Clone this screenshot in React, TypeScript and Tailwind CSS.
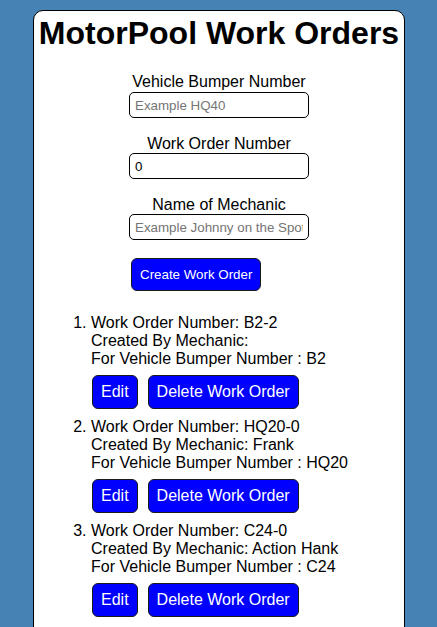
import React, { useState } from 'react';

type WorkOrder = {
  id: string;
  mechanic: string;
  bumper: string;
};

const orders: WorkOrder[] = [
  { id: 'B2-2', mechanic: '', bumper: 'B2' },
  { id: 'HQ20-0', mechanic: 'Frank', bumper: 'HQ20' },
  { id: 'C24-0', mechanic: 'Action Hank', bumper: 'C24' },
];

const btn =
  'flex items-center rounded-[6px] border border-[#1a1a1a] bg-[#0000ff] text-white leading-[normal] cursor-pointer whitespace-nowrap';

const App: React.FC = () => {
  const [bumper, setBumper] = useState('');
  const [orderNumber, setOrderNumber] = useState('0');
  const [mechanic, setMechanic] = useState('');

  return (
    <div className="min-h-[627px] w-full overflow-hidden bg-[#4682b4] pt-[10px] font-['Liberation_Sans',Arial,sans-serif] text-black">
      <div className="ml-[33px] w-[372px] rounded-[10px] border border-black bg-white pt-[4px] pb-[40px]">
        <h1 className="text-center text-[32px] font-bold leading-[normal]">MotorPool Work Orders</h1>

        {/* Form */}
        <div className="mx-auto mt-[21px] flex w-[180px] flex-col">
          <label className="-mx-[40px] text-center text-[16px] leading-[normal]">Vehicle Bumper Number</label>
          <input
            className="mt-[1px] h-[26px] w-[180px] rounded-[5px] border border-black px-[5px] text-[13.33px] outline-none placeholder:text-[#757575]"
            placeholder="Example HQ40"
            value={bumper}
            onChange={(e) => setBumper(e.target.value)}
          />

          <label className="-mx-[40px] mt-[17px] text-center text-[16px] leading-[normal]">Work Order Number</label>
          <input
            className="h-[26px] w-[180px] rounded-[5px] border border-black px-[5px] text-[13.33px] outline-none"
            value={orderNumber}
            onChange={(e) => setOrderNumber(e.target.value)}
          />

          <label className="-mx-[40px] mt-[17px] text-center text-[16px] leading-[normal]">Name of Mechanic</label>
          <input
            className="h-[26px] w-[180px] rounded-[5px] border border-black px-[5px] text-[13.33px] outline-none placeholder:text-[#757575]"
            placeholder="Example Johnny on the Spot"
            value={mechanic}
            onChange={(e) => setMechanic(e.target.value)}
          />

          <div className="mt-[18px] ml-[2px] flex">
            <button className={`${btn} h-[33px] px-[8px] text-[13.33px]`}>Create Work Order</button>
          </div>
        </div>

        {/* Work order list */}
        <ol className="mt-[23px] list-decimal pl-[57px] text-[16px] leading-[normal]">
          {orders.map((o) => (
            <li key={o.id} className="mb-[9px]">
              <div>Work Order Number: {o.id}</div>
              <div>Created By Mechanic: {o.mechanic}</div>
              <div>For Vehicle Bumper Number : {o.bumper}</div>
              <div className="mt-[7px] ml-[1px] flex gap-[10px]">
                <button className={`${btn} h-[34px] px-[8px] text-[16px]`}>Edit</button>
                <button className={`${btn} h-[34px] px-[8px] text-[16px]`}>Delete Work Order</button>
              </div>
            </li>
          ))}
        </ol>
      </div>
    </div>
  );
};

export default App;
